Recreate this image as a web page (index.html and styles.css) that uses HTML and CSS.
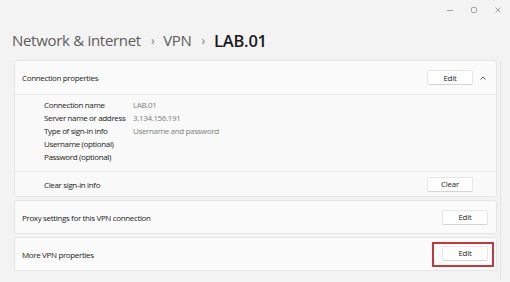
FILE: index.html
```html
<!DOCTYPE html>
<html>
<head>
<meta charset="utf-8">
<link rel="stylesheet" href="styles.css">
</head>
<body>
<div class="window">
  <div class="titlebar">
    <span class="ctl"><svg width="10" height="10" viewBox="0 0 10 10"><path d="M2 5.5h6" stroke="#a0a0a0" stroke-width="1"/></svg></span>
    <span class="ctl"><svg width="10" height="10" viewBox="0 0 10 10"><rect x="2.5" y="2.5" width="5" height="5" rx="1.2" fill="none" stroke="#a0a0a0" stroke-width="1"/></svg></span>
    <span class="ctl"><svg width="10" height="10" viewBox="0 0 10 10"><path d="M2.5 2.5l5 5M7.5 2.5l-5 5" stroke="#a0a0a0" stroke-width="1"/></svg></span>
  </div>
  <div class="crumbs">
    <span class="crumb">Network &amp; internet</span>
    <span class="sep">›</span>
    <span class="crumb">VPN</span>
    <span class="sep">›</span>
    <span class="crumb current">LAB.01</span>
  </div>
  <div class="content">
    <div class="cards">
      <div class="card">
        <div class="row head">
          <span class="label">Connection properties</span>
          <div class="actions">
            <button class="btn">Edit</button>
            <svg class="chev" width="10" height="10" viewBox="0 0 10 10"><path d="M2.5 6.5L5 4l2.5 2.5" fill="none" stroke="#555" stroke-width="1"/></svg>
          </div>
        </div>
        <div class="details">
          <div class="drow"><span class="k">Connection name</span><span class="v">LAB.01</span></div>
          <div class="drow"><span class="k">Server name or address</span><span class="v">3.134.156.191</span></div>
          <div class="drow"><span class="k">Type of sign-in info</span><span class="v">Username and password</span></div>
          <div class="drow"><span class="k">Username (optional)</span><span class="v"></span></div>
          <div class="drow"><span class="k">Password (optional)</span><span class="v"></span></div>
        </div>
        <div class="row clear">
          <span class="label sub">Clear sign-in info</span>
          <div class="actions"><button class="btn">Clear</button></div>
        </div>
      </div>
      <div class="card">
        <div class="row single proxy">
          <span class="label">Proxy settings for this VPN connection</span>
          <div class="actions"><button class="btn">Edit</button></div>
        </div>
      </div>
      <div class="card">
        <div class="row single more">
          <span class="label">More VPN properties</span>
          <div class="actions"><span class="highlight"><button class="btn">Edit</button></span></div>
        </div>
      </div>
    </div>
    <div class="scroll"></div>
  </div>
</div>
</body>
</html>
```
FILE: styles.css
```css
* { box-sizing: border-box; }
html, body { margin: 0; padding: 0; }
body {
  background: #f3f3f3;
  font-family: "Open Sans", "Noto Sans", sans-serif;
  color: #1b1b1b;
  width: 510px;
  height: 282px;
  overflow: hidden;
}
.window { display: flex; flex-direction: column; height: 282px; }
.titlebar {
  height: 20px;
  display: flex;
  justify-content: flex-end;
  align-items: center;
  gap: 14px;
  padding-right: 7px;
}
.ctl { width: 10px; height: 10px; display: flex; }
.crumbs {
  height: 40px;
  display: flex;
  align-items: center;
  padding-left: 12px;
  font-size: 15px;
  letter-spacing: -0.3px;
  color: #5c5c5c;
}
.sep { font-size: 12px; margin: 0 9px 0 10px; color: #7a7a7a; }
.current { color: #1a1a1a; font-weight: 600; font-size: 16.5px; letter-spacing: -0.2px; }
.content { display: flex; padding-left: 14px; }
.cards { width: 483px; display: flex; flex-direction: column; gap: 3px; }
.scroll { width: 1px; background: #e4e4e4; margin-left: 3px; height: 220px; }
.card {
  background: #fbfbfb;
  border: 1px solid #e5e5e5;
  border-radius: 3px;
}
.row {
  display: flex;
  align-items: center;
  justify-content: space-between;
  padding: 0 8px 0 7px;
  font-size: 8px;
  letter-spacing: -0.35px;
  white-space: nowrap;
}
.head { height: 34px; border-bottom: 1px solid #e8e8e8; }
.single { height: 32px; }
.actions { display: flex; align-items: center; gap: 5px; }
.chev { display: block; }
.btn {
  width: 46px;
  height: 15px;
  border: 1px solid #e6e6e6;
  border-bottom-color: #d4d4d4;
  border-radius: 2px;
  background: #fefefe;
  font-family: inherit;
  font-size: 7.8px;
  letter-spacing: -0.2px;
  color: #1b1b1b;
  padding: 0;
}
.details {
  background: #f9f9f9;
  padding: 3px 0 8px 29px;
  border-bottom: 1px solid #e8e8e8;
  font-size: 8px;
  letter-spacing: -0.35px;
  white-space: nowrap;
}
.drow { display: flex; height: 13px; align-items: center; }
.k { width: 89px; color: #1b1b1b; }
.v { color: #7d7d7d; }
.clear { height: 24px; padding-right: 23px; background: #f9f9f9; }
.sub { padding-left: 22px; }
.more { padding-right: 2px; }
.highlight {
  display: flex;
  padding: 2px 4px 4px 8px;
  border: 2px solid #c0393e;
}
```
